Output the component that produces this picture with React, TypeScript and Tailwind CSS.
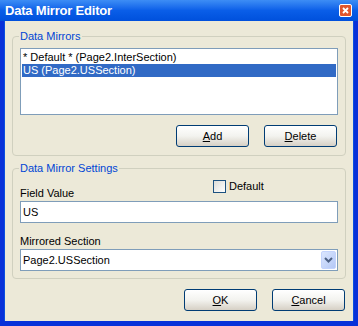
import React from "react";

const font = { fontFamily: '"Liberation Sans", Arial, sans-serif' };

function XpButton({ label, width = "w-[73px]" }: { label: string; width?: string }) {
  return (
    <button
      className={`${width} h-[22px] rounded-[3px] border border-[#003c74] bg-gradient-to-b from-[#ffffff] via-[#f3f3ef] to-[#d6d0c5] text-[11px] text-black leading-none`}
    >
      <span className="underline">{label[0]}</span>
      {label.slice(1)}
    </button>
  );
}

function GroupBox({ title, bottom, children }: { title: string; bottom: string; children: React.ReactNode }) {
  return (
    <fieldset className={`rounded-[4px] border border-[#d0d0bf] px-[7px] ${bottom}`}>
      <legend className="-ml-[1px] px-[1px] text-[11px] leading-[13px] text-[#0046d5]">{title}</legend>
      {children}
    </fieldset>
  );
}

export default function App() {
  const [selected, setSelected] = React.useState(1);
  const mirrors = ["* Default * (Page2.InterSection)", "US (Page2.USSection)"];

  return (
    <div style={font} className="w-[358px] h-[326px] flex flex-col bg-[#0831d9] text-[11px] text-black">
      {/* title bar */}
      <div className="h-[21px] flex items-center justify-between pl-[5px] pr-[6px] bg-gradient-to-b from-[#3d8df5] via-[#0a5ee8] to-[#0050dc]">
        <span className="text-[13px] font-bold text-white leading-none tracking-[-0.2px]">Data Mirror Editor</span>
        <div className="w-[13px] h-[13px] rounded-[2px] border border-white bg-[#e0552d] flex items-center justify-center">
          <svg width="7" height="7" viewBox="0 0 7 7">
            <path d="M1 1 L6 6 M6 1 L1 6" stroke="white" strokeWidth="1.8" />
          </svg>
        </div>
      </div>

      {/* client area */}
      <div className="flex-1 mx-[4px] mb-[5px] bg-[#ece9d8] border-l border-r border-[#0a4fe0] flex flex-col px-[7px] pt-[9px]">
        <GroupBox title="Data Mirrors" bottom="pb-[8px]">
          <div className="mt-[5px] h-[67px] border border-[#7f9db9] bg-white px-[1px] pt-[2px]">
            {mirrors.map((m, i) => (
              <div
                key={m}
                onClick={() => setSelected(i)}
                className={`h-[13px] leading-[13px] pl-[1px] ${
                  selected === i ? "bg-[#316ac5] text-white" : "text-black"
                }`}
              >
                {m}
              </div>
            ))}
          </div>
          <div className="mt-[10px] flex justify-end gap-[15px] pr-[1px]">
            <XpButton label="Add" />
            <XpButton label="Delete" />
          </div>
        </GroupBox>

        <div className="mt-[6px]">
          <GroupBox title="Data Mirror Settings" bottom="pb-[7px]">
            <div className="flex items-start">
              <div className="w-[193px] pt-[12px] leading-[13px]">Field Value</div>
              <label className="mt-[5px] flex items-center gap-[3px]">
                <span className="w-[13px] h-[13px] border border-[#1c5180] bg-gradient-to-br from-[#dcdcd7] to-white" />
                <span className="leading-[13px]">Default</span>
              </label>
            </div>
            <div className="mt-[1px] h-[22px] border border-[#7f9db9] bg-white flex items-center pl-[2px]">US</div>
            <div className="mt-[12px] leading-[13px]">Mirrored Section</div>
            <div className="mt-[1px] h-[22px] border border-[#7f9db9] bg-white flex items-center justify-between pl-[2px] pr-[1px]">
              <span>Page2.USSection</span>
              <div className="w-[15px] h-[18px] rounded-[2px] bg-gradient-to-br from-[#dbe6fe] to-[#b4c8f6] border border-[#c3d3fd] flex items-center justify-center">
                <svg width="9" height="6" viewBox="0 0 9 6">
                  <path d="M1 1 L4.5 4.5 L8 1" stroke="#4d6185" strokeWidth="2" fill="none" />
                </svg>
              </div>
            </div>
          </GroupBox>
        </div>

        <div className="mt-[10px] flex justify-end gap-[15px] pr-[1px]">
          <XpButton label="OK" />
          <XpButton label="Cancel" />
        </div>
      </div>
    </div>
  );
}
